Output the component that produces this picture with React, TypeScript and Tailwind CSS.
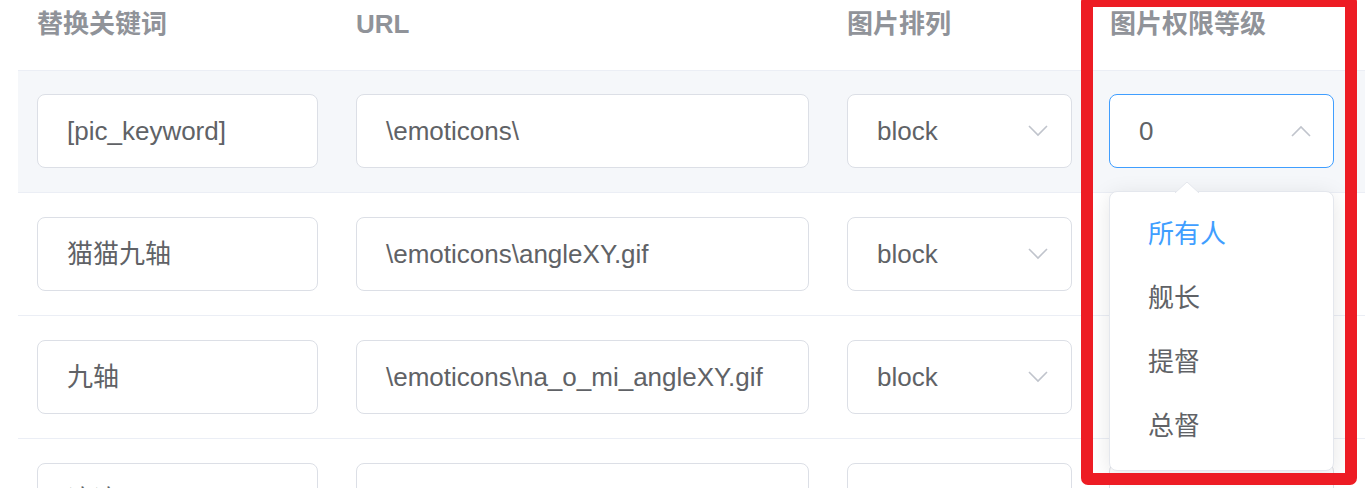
import React from "react";

const FONT = { fontFamily: '"Liberation Sans", Arial, "Noto Sans CJK SC", sans-serif' };

function Chevron({ up = false }: { up?: boolean }) {
  return (
    <svg width="20" height="12" viewBox="0 0 20 12" className="shrink-0">
      <polyline
        points={up ? "1,11 10,2 19,11" : "1,1 10,10 19,1"}
        fill="none"
        stroke="#c0c4cc"
        strokeWidth="1.6"
      />
    </svg>
  );
}

function TextInput({ value }: { value: string }) {
  return (
    <div className="flex h-[74px] w-full items-center rounded-[8px] border border-[#dcdfe6] bg-white pl-[29px] text-[26px] text-[#606266] whitespace-nowrap overflow-hidden">
      {value}
    </div>
  );
}

function Select({ value, active = false }: { value: string; active?: boolean }) {
  return (
    <div
      className={
        active
          ? "flex h-[74px] w-full items-center justify-between rounded-[8px] border border-[#409eff] bg-white pl-[29px] pr-[22px] text-[26px] text-[#606266]"
          : "flex h-[74px] w-full items-center justify-between rounded-[8px] border border-[#dcdfe6] bg-white pl-[29px] pr-[23px] text-[26px] text-[#606266]"
      }
    >
      <span>{value}</span>
      <Chevron up={active} />
    </div>
  );
}

function Dropdown() {
  const items = ["所有人", "舰长", "提督", "总督"];
  return (
    <div className="absolute left-0 top-[97px] z-10 w-[225px] rounded-[8px] border border-[#e4e7ed] bg-white pt-[10px] pb-[12px] shadow-[0_4px_22px_rgba(0,0,0,0.1)]">
      <svg width="24" height="11" viewBox="0 0 24 11" className="absolute left-[65px] top-[-10px]">
        <polygon points="0,11 12,0 24,11" fill="#ffffff" />
        <polyline points="0,11 12,0 24,11" fill="none" stroke="#e4e7ed" strokeWidth="1" />
      </svg>
      {items.map((it, i) => (
        <div
          key={it}
          className={
            i === 0
              ? "flex h-[64px] items-center pl-[38px] text-[26px] text-[#409eff]"
              : "flex h-[64px] items-center pl-[38px] text-[26px] text-[#606266]"
          }
        >
          {it}
        </div>
      ))}
    </div>
  );
}

const rows = [
  { k: "[pic_keyword]", u: "\\emoticons\\", a: "block", p: "0" },
  { k: "猫猫九轴", u: "\\emoticons\\angleXY.gif", a: "block", p: "" },
  { k: "九轴", u: "\\emoticons\\na_o_mi_angleXY.gif", a: "block", p: "" },
  { k: "浪浪", u: "", a: "", p: "" },
];

export default function App() {
  return (
    <div className="relative h-[488px] w-[1365px] overflow-hidden bg-white" style={FONT}>
      <div className="pl-[18px]">
        <div className="grid h-[71px] grid-cols-[319px_491px_263px_274px] border-b border-[#ebeef5] text-[26px] font-bold leading-[40px] text-[#909399]">
          <div className="px-[19px] pt-[4px]">替换关键词</div>
          <div className="px-[19px] pt-[4px]">URL</div>
          <div className="px-[19px] pt-[4px]">图片排列</div>
          <div className="px-[19px] pt-[4px]">图片权限等级</div>
        </div>
        {rows.map((r, i) => (
          <div
            key={i}
            className={
              i === 0
                ? "grid grid-cols-[319px_491px_263px_274px] border-b border-[#ebeef5] bg-[#f5f7fa] pt-[23px] pb-[24px]"
                : "grid grid-cols-[319px_491px_263px_274px] border-b border-[#ebeef5] bg-white py-[24px]"
            }
          >
            <div className="px-[19px]">
              <TextInput value={r.k} />
            </div>
            <div className="px-[19px]">
              <TextInput value={r.u} />
            </div>
            <div className="px-[19px]">
              <Select value={r.a} />
            </div>
            <div className="pl-[18px] pr-[31px]">
              <div className="relative">
                <Select value={r.p} active={i === 0} />
                {i === 0 && <Dropdown />}
              </div>
            </div>
          </div>
        ))}
      </div>
      <div className="pointer-events-none absolute left-[1081px] top-[-5px] z-20 h-[490px] w-[276px] rounded-[7px] border-[12px] border-[#ed1c24]" />
    </div>
  );
}
